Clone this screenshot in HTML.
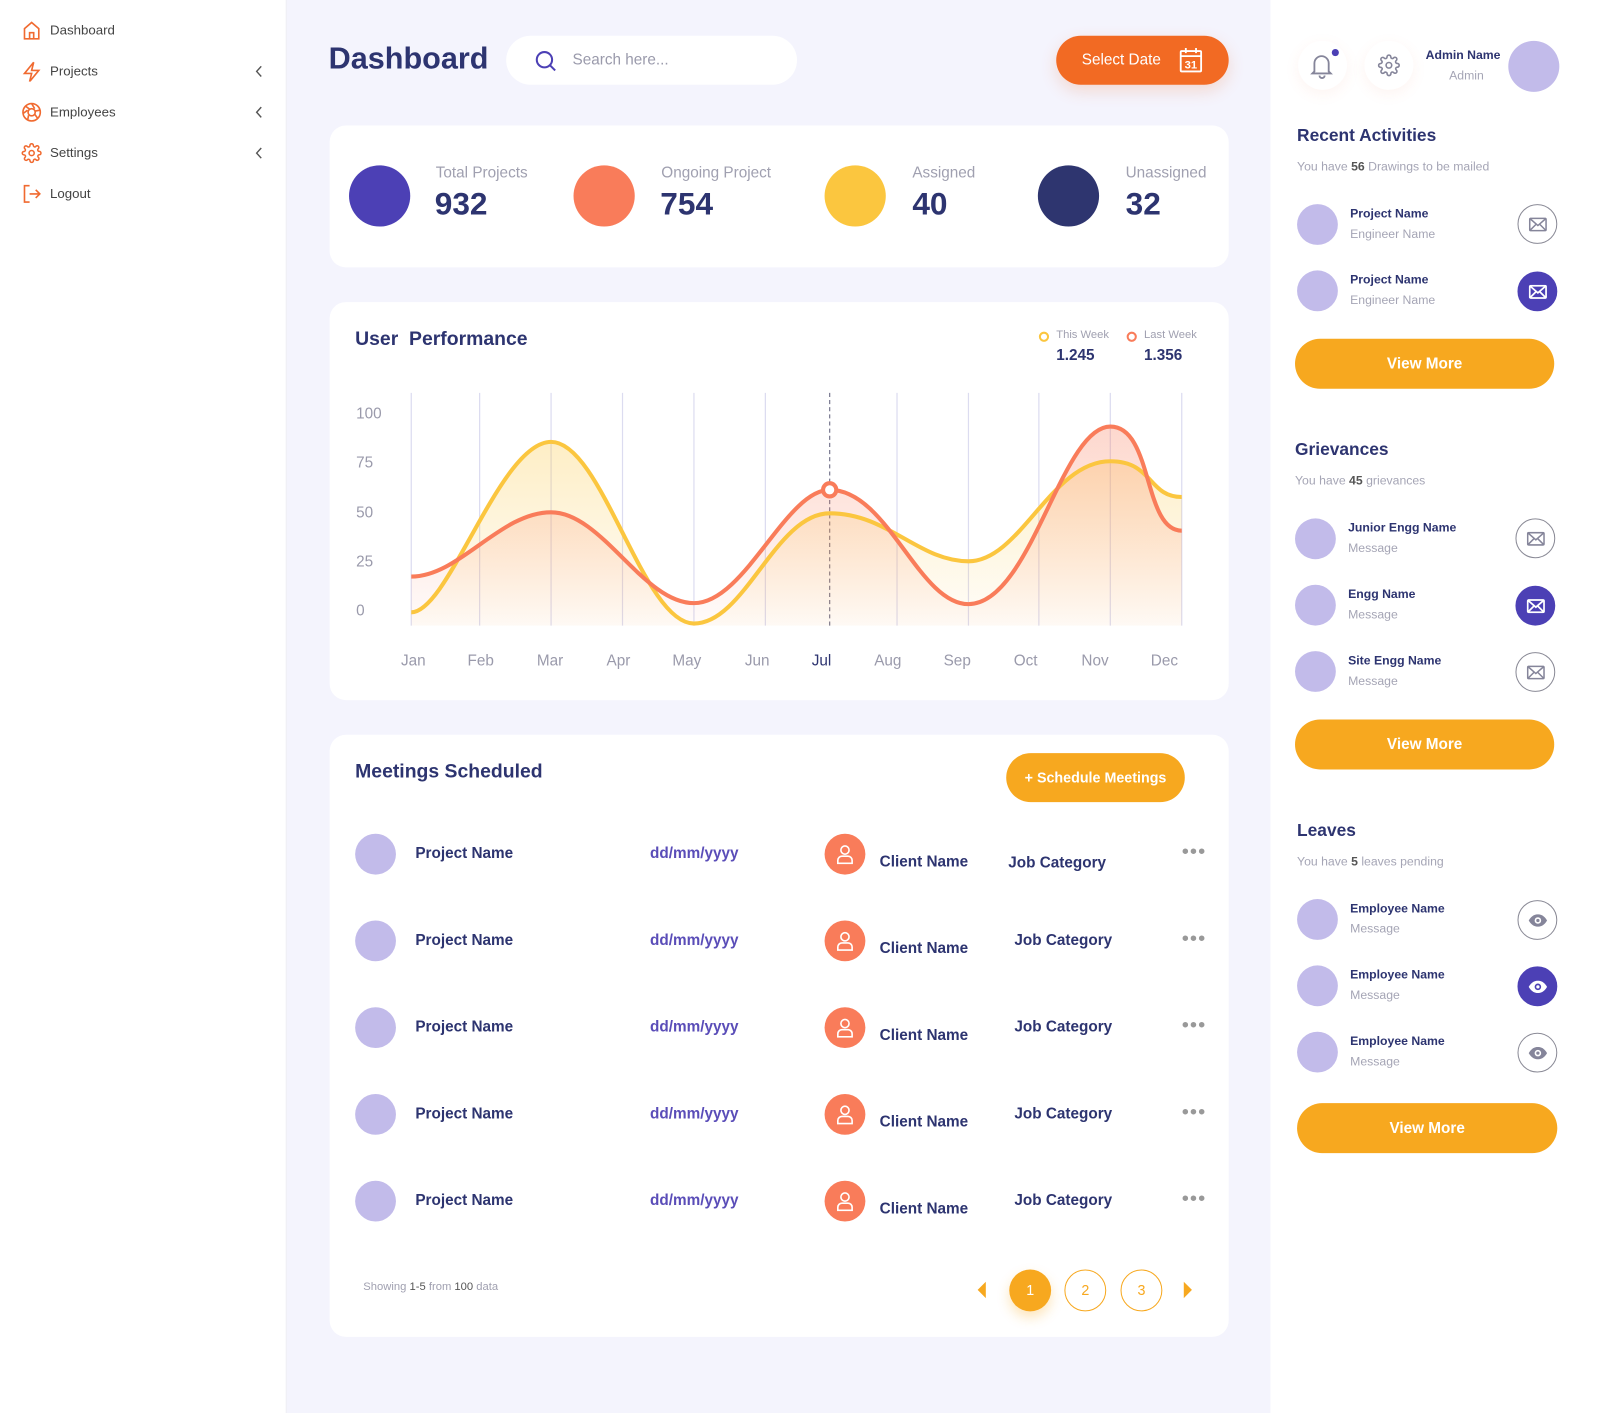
<!DOCTYPE html>
<html><head><meta charset="utf-8">
<style>
*{margin:0;padding:0;box-sizing:border-box}
html,body{width:1600px;height:1410px;overflow:hidden;background:#f4f4fd;font-family:"Liberation Sans",sans-serif}
#w{position:absolute;left:0;top:0;width:1570px;height:1385px;transform:scale(1.0205);transform-origin:0 0}
.a{position:absolute;white-space:nowrap}
.card{position:absolute;background:#fff;border-radius:16px}
.nav{font-size:13px;color:#444;line-height:16px}
.av{position:absolute;width:40px;height:40px;border-radius:50%;background:#c2bbea}
.nm{font-size:12px;font-weight:bold;color:#2d3470}
.sb{font-size:12px;color:#a5a5b5}
.ic{position:absolute;width:39px;height:39px;border-radius:50%;border:1.5px solid #8a8a96;display:flex;align-items:center;justify-content:center}
.ic.f{background:#4c40b5;border-color:#4c40b5}
.btn{position:absolute;background:#f7a81f;color:#fff;font-weight:bold;font-size:15px;border-radius:25px;display:flex;align-items:center;justify-content:center}
.pn{font-size:15px;font-weight:bold;color:#2d3470}
.dt{font-size:15px;font-weight:bold;color:#5a4db8}
.ci{position:absolute;width:40px;height:40px;border-radius:50%;background:#f97c5a;display:flex;align-items:center;justify-content:center}
.dots{font-size:20px;color:#999;letter-spacing:1px}
.ml{font-size:15px;color:#a0a0b0}
.h2{font-size:17px;font-weight:bold;color:#2d3470}
.chev{position:absolute;left:250px}
</style></head><body><div id="w">
<div class="a" style="left:0;top:0;width:281px;height:1385px;background:#fff;border-right:1px solid #ececf4"></div>
<svg class="a" style="left:21px;top:20px" width="20" height="20" viewBox="0 0 20 20" fill="none" stroke="#f06a30" stroke-width="1.6"><path d="M3 8L10 2l7 6v10H3z"/><path d="M8 18v-6h4v6"/></svg>
<div class="a nav" style="left:49px;top:22px">Dashboard</div>
<svg class="a" style="left:21px;top:60px" width="20" height="20" viewBox="0 0 20 20" fill="none" stroke="#f06a30" stroke-width="1.6"><path d="M12 1L3 12h7l-2 8 9-11h-7z"/></svg>
<div class="a nav" style="left:49px;top:62px">Projects</div>
<svg class="chev" style="top:64px" width="8" height="12"><path d="M6 1L1.5 6 6 11" fill="none" stroke="#555" stroke-width="1.4"/></svg>
<svg class="a" style="left:21px;top:100px" width="20" height="20" viewBox="0 0 20 20" fill="none" stroke="#f06a30" stroke-width="1.6"><circle cx="10" cy="10" r="8.5"/><circle cx="10" cy="10" r="3.5"/><path d="M10 1.5l3 5M18 8l-5 1M16 16l-3-4M6 18l1-5M2 11l4-3M4 4l4 3"/></svg>
<div class="a nav" style="left:49px;top:102px">Employees</div>
<svg class="chev" style="top:104px" width="8" height="12"><path d="M6 1L1.5 6 6 11" fill="none" stroke="#555" stroke-width="1.4"/></svg>
<svg class="a" style="left:21px;top:140px" width="20" height="20" viewBox="0 0 24 24" fill="none" stroke="#f06a30" stroke-width="1.8"><circle cx="12" cy="12" r="3"/><path d="M19.4 15a1.7 1.7 0 0 0 .3 1.8l.1.1a2 2 0 1 1-2.8 2.8l-.1-.1a1.7 1.7 0 0 0-1.8-.3 1.7 1.7 0 0 0-1 1.5V21a2 2 0 1 1-4 0v-.1a1.7 1.7 0 0 0-1.1-1.5 1.7 1.7 0 0 0-1.8.3l-.1.1a2 2 0 1 1-2.8-2.8l.1-.1a1.7 1.7 0 0 0 .3-1.8 1.7 1.7 0 0 0-1.5-1H3a2 2 0 1 1 0-4h.1a1.7 1.7 0 0 0 1.5-1.1 1.7 1.7 0 0 0-.3-1.8l-.1-.1a2 2 0 1 1 2.8-2.8l.1.1a1.7 1.7 0 0 0 1.8.3H9a1.7 1.7 0 0 0 1-1.5V3a2 2 0 1 1 4 0v.1a1.7 1.7 0 0 0 1 1.5 1.7 1.7 0 0 0 1.8-.3l.1-.1a2 2 0 1 1 2.8 2.8l-.1.1a1.7 1.7 0 0 0-.3 1.8V9a1.7 1.7 0 0 0 1.5 1H21a2 2 0 1 1 0 4h-.1a1.7 1.7 0 0 0-1.5 1z"/></svg>
<div class="a nav" style="left:49px;top:142px">Settings</div>
<svg class="chev" style="top:144px" width="8" height="12"><path d="M6 1L1.5 6 6 11" fill="none" stroke="#555" stroke-width="1.4"/></svg>
<svg class="a" style="left:21px;top:180px" width="20" height="20" viewBox="0 0 20 20" fill="none" stroke="#f06a30" stroke-width="1.6"><path d="M8 2H3v16h5M8 10h10M14 6l4 4-4 4"/></svg>
<div class="a nav" style="left:49px;top:182px">Logout</div>

<div class="a" style="left:322px;top:41px;font-size:30px;font-weight:bold;color:#2d3470">Dashboard</div>
<div class="a" style="left:496px;top:35px;width:285px;height:48px;background:#fff;border-radius:24px"></div>
<svg class="a" style="left:523px;top:48px" width="24" height="24" viewBox="0 0 24 24" fill="none" stroke="#4c40b5" stroke-width="2"><circle cx="10.5" cy="10.5" r="7.5"/><path d="M16 16l5 5"/></svg>
<div class="a" style="left:561px;top:50px;font-size:15px;color:#9a9aab">Search here...</div>
<div class="a" style="left:1035px;top:35px;width:169px;height:48px;background:#f26a23;border-radius:24px;box-shadow:0 6px 16px rgba(242,106,35,.2)"></div>
<div class="a" style="left:1060px;top:50px;font-size:15px;color:#fff">Select Date</div>
<svg class="a" style="left:1155px;top:46px" width="24" height="26" viewBox="0 0 24 26" fill="none" stroke="#fff" stroke-width="1.8"><rect x="2" y="4" width="20" height="20" rx="1"/><path d="M2 9h20M7 1v5M17 1v5"/><text x="12" y="21" font-size="11" font-weight="bold" fill="#fff" stroke="none" text-anchor="middle" font-family="Liberation Sans">31</text></svg>

<div class="card" style="left:323px;top:123px;width:881px;height:139px"></div>
<div class="a" style="left:342px;top:162px;width:60px;height:60px;border-radius:50%;background:#4c40b5"></div>
<div class="a" style="left:562px;top:162px;width:60px;height:60px;border-radius:50%;background:#f97c5a"></div>
<div class="a" style="left:808px;top:162px;width:60px;height:60px;border-radius:50%;background:#fbc63f"></div>
<div class="a" style="left:1017px;top:162px;width:60px;height:60px;border-radius:50%;background:#2e356f"></div>
<div class="a ml" style="left:427px;top:161px">Total Projects</div>
<div class="a ml" style="left:648px;top:161px">Ongoing Project</div>
<div class="a ml" style="left:894px;top:161px">Assigned</div>
<div class="a ml" style="left:1103px;top:161px">Unassigned</div>
<div class="a" style="left:426px;top:182px;font-size:31px;font-weight:bold;color:#2d3470">932</div>
<div class="a" style="left:647px;top:182px;font-size:31px;font-weight:bold;color:#2d3470">754</div>
<div class="a" style="left:894px;top:182px;font-size:31px;font-weight:bold;color:#2d3470">40</div>
<div class="a" style="left:1103px;top:182px;font-size:31px;font-weight:bold;color:#2d3470">32</div>

<div class="card" style="left:323px;top:296px;width:881px;height:390px"></div>
<div class="a" style="left:348px;top:322px;font-size:19px;font-weight:bold;color:#2d3470">User&nbsp; Performance</div>
<div class="a" style="left:1018px;top:325px;width:10px;height:10px;border-radius:50%;border:2.5px solid #fbc63f"></div>
<div class="a" style="left:1035px;top:322px;font-size:11px;color:#a0a0b0">This Week</div>
<div class="a" style="left:1104px;top:325px;width:10px;height:10px;border-radius:50%;border:2.5px solid #f97c5a"></div>
<div class="a" style="left:1121px;top:322px;font-size:11px;color:#a0a0b0">Last Week</div>
<div class="a" style="left:1035px;top:340px;font-size:15px;font-weight:bold;color:#2d3470">1.245</div>
<div class="a" style="left:1121px;top:340px;font-size:15px;font-weight:bold;color:#2d3470">1.356</div>
<svg class="a" style="left:0;top:0" width="1560" height="700">
<defs>
<linearGradient id="gy" x1="0" y1="0" x2="0" y2="1"><stop offset="0" stop-color="#fbc63f" stop-opacity=".3"/><stop offset="1" stop-color="#fbc63f" stop-opacity=".03"/></linearGradient>
<linearGradient id="gr" x1="0" y1="0" x2="0" y2="1"><stop offset="0" stop-color="#f97c5a" stop-opacity=".3"/><stop offset="1" stop-color="#f97c5a" stop-opacity=".03"/></linearGradient>
</defs>
<g stroke="#dcdcf0" stroke-width="1.2">
<path d="M403 385V613M470 385V613M540 385V613M610 385V613M680 385V613M750 385V613M879 385V613M949 385V613M1018 385V613M1088 385V613M1158 385V613"/>
</g>
<path d="M813 385V613" stroke="#7a7a90" stroke-width="1.2" stroke-dasharray="4 3"/>
<g font-family="Liberation Sans" font-size="15" fill="#9a9aab">
<text x="349" y="410">100</text><text x="349" y="458">75</text><text x="349" y="507">50</text><text x="349" y="555">25</text><text x="349" y="603">0</text>
<g text-anchor="middle"><text x="405" y="652">Jan</text><text x="471" y="652">Feb</text><text x="539" y="652">Mar</text><text x="606" y="652">Apr</text><text x="673" y="652">May</text><text x="742" y="652">Jun</text><text x="805" y="652" fill="#2d3470">Jul</text><text x="870" y="652">Aug</text><text x="938" y="652">Sep</text><text x="1005" y="652">Oct</text><text x="1073" y="652">Nov</text><text x="1141" y="652">Dec</text></g>
</g>
<path d="M403,600 C440,600 490,433 540,433 C590,433 630,611 680,611 C730,611 760,503 813,503 C870,503 900,550 949,550 C1000,550 1030,452 1088,452 C1130,452 1125,487 1158,487 V613 H403Z" fill="url(#gy)"/>
<path d="M403,565 C450,565 490,502 540,502 C590,502 630,591 680,591 C730,591 770,480 813,480 C870,480 900,592 949,592 C1010,592 1040,418 1088,418 C1130,418 1120,520 1158,520 V613 H403Z" fill="url(#gr)"/>
<path d="M403,600 C440,600 490,433 540,433 C590,433 630,611 680,611 C730,611 760,503 813,503 C870,503 900,550 949,550 C1000,550 1030,452 1088,452 C1130,452 1125,487 1158,487" fill="none" stroke="#fbc63f" stroke-width="4"/>
<path d="M403,565 C450,565 490,502 540,502 C590,502 630,591 680,591 C730,591 770,480 813,480 C870,480 900,592 949,592 C1010,592 1040,418 1088,418 C1130,418 1120,520 1158,520" fill="none" stroke="#f97c5a" stroke-width="4"/>
<circle cx="813" cy="480" r="6.5" fill="#fff" stroke="#f97c5a" stroke-width="4"/>
</svg>

<div class="card" style="left:323px;top:720px;width:881px;height:590px"></div>
<div class="a" style="left:348px;top:746px;font-size:19px;font-weight:bold;color:#2d3470">Meetings Scheduled</div>
<div class="btn" style="left:986px;top:738px;width:175px;height:48px;font-size:14px">+ Schedule Meetings</div>

<div class="av" style="left:348px;top:817px"></div><div class="a pn" style="left:407px;top:828px">Project Name</div><div class="a dt" style="left:637px;top:828px">dd/mm/yyyy</div>
<div class="ci" style="left:808px;top:817px"><svg width="18" height="20" viewBox="0 0 18 20" fill="none" stroke="#fff" stroke-width="1.6"><circle cx="9" cy="6" r="4"/><path d="M2 19v-3a4 4 0 0 1 4-4h6a4 4 0 0 1 4 4v3z"/></svg></div>
<div class="a pn" style="left:862px;top:836px">Client Name</div><div class="a pn" style="left:988px;top:837px">Job Category</div><div class="a dots" style="left:1158px;top:824px">•••</div>

<div class="av" style="left:348px;top:902px"></div><div class="a pn" style="left:407px;top:913px">Project Name</div><div class="a dt" style="left:637px;top:913px">dd/mm/yyyy</div>
<div class="ci" style="left:808px;top:902px"><svg width="18" height="20" viewBox="0 0 18 20" fill="none" stroke="#fff" stroke-width="1.6"><circle cx="9" cy="6" r="4"/><path d="M2 19v-3a4 4 0 0 1 4-4h6a4 4 0 0 1 4 4v3z"/></svg></div>
<div class="a pn" style="left:862px;top:921px">Client Name</div><div class="a pn" style="left:994px;top:913px">Job Category</div><div class="a dots" style="left:1158px;top:909px">•••</div>

<div class="av" style="left:348px;top:987px"></div><div class="a pn" style="left:407px;top:998px">Project Name</div><div class="a dt" style="left:637px;top:998px">dd/mm/yyyy</div>
<div class="ci" style="left:808px;top:987px"><svg width="18" height="20" viewBox="0 0 18 20" fill="none" stroke="#fff" stroke-width="1.6"><circle cx="9" cy="6" r="4"/><path d="M2 19v-3a4 4 0 0 1 4-4h6a4 4 0 0 1 4 4v3z"/></svg></div>
<div class="a pn" style="left:862px;top:1006px">Client Name</div><div class="a pn" style="left:994px;top:998px">Job Category</div><div class="a dots" style="left:1158px;top:994px">•••</div>

<div class="av" style="left:348px;top:1072px"></div><div class="a pn" style="left:407px;top:1083px">Project Name</div><div class="a dt" style="left:637px;top:1083px">dd/mm/yyyy</div>
<div class="ci" style="left:808px;top:1072px"><svg width="18" height="20" viewBox="0 0 18 20" fill="none" stroke="#fff" stroke-width="1.6"><circle cx="9" cy="6" r="4"/><path d="M2 19v-3a4 4 0 0 1 4-4h6a4 4 0 0 1 4 4v3z"/></svg></div>
<div class="a pn" style="left:862px;top:1091px">Client Name</div><div class="a pn" style="left:994px;top:1083px">Job Category</div><div class="a dots" style="left:1158px;top:1079px">•••</div>

<div class="av" style="left:348px;top:1157px"></div><div class="a pn" style="left:407px;top:1168px">Project Name</div><div class="a dt" style="left:637px;top:1168px">dd/mm/yyyy</div>
<div class="ci" style="left:808px;top:1157px"><svg width="18" height="20" viewBox="0 0 18 20" fill="none" stroke="#fff" stroke-width="1.6"><circle cx="9" cy="6" r="4"/><path d="M2 19v-3a4 4 0 0 1 4-4h6a4 4 0 0 1 4 4v3z"/></svg></div>
<div class="a pn" style="left:862px;top:1176px">Client Name</div><div class="a pn" style="left:994px;top:1168px">Job Category</div><div class="a dots" style="left:1158px;top:1164px">•••</div>

<div class="a" style="left:356px;top:1255px;font-size:11px;color:#a0a0b0">Showing <b style="color:#555;font-weight:normal">1-5</b> from <b style="color:#555;font-weight:normal">100</b> data</div>
<svg class="a" style="left:956px;top:1255px" width="12" height="18"><path d="M10 1L2 9l8 8z" fill="#f7a81f"/></svg>
<div class="a" style="left:989px;top:1244px;width:41px;height:41px;border-radius:50%;background:#f7a81f;color:#fff;font-size:14px;text-align:center;line-height:41px;box-shadow:0 6px 12px rgba(247,168,31,.3)">1</div>
<div class="a" style="left:1043px;top:1244px;width:41px;height:41px;border-radius:50%;border:1.5px solid #f7a81f;color:#f7a81f;font-size:14px;text-align:center;line-height:38px">2</div>
<div class="a" style="left:1098px;top:1244px;width:41px;height:41px;border-radius:50%;border:1.5px solid #f7a81f;color:#f7a81f;font-size:14px;text-align:center;line-height:38px">3</div>
<svg class="a" style="left:1158px;top:1255px" width="12" height="18"><path d="M2 1l8 8-8 8z" fill="#f7a81f"/></svg>

<div class="a" style="left:1245px;top:0;width:325px;height:1385px;background:#fff"></div>
<div class="a" style="left:1272px;top:40px;width:48px;height:48px;border-radius:50%;background:#fff;box-shadow:0 4px 14px rgba(240,120,80,.08)"></div>
<svg class="a" style="left:1283px;top:50px" width="26" height="28" viewBox="0 0 26 28" fill="none" stroke="#85859a" stroke-width="1.8"><path d="M5 20V12a7 7 0 0 1 14 0v8l2 2H3z"/><path d="M10 24a2.5 2.5 0 0 0 5 0"/></svg>
<div class="a" style="left:1305px;top:48px;width:7px;height:7px;border-radius:50%;background:#4c40b5"></div>
<div class="a" style="left:1337px;top:40px;width:48px;height:48px;border-radius:50%;background:#fff;box-shadow:0 4px 14px rgba(240,120,80,.08)"></div>
<svg class="a" style="left:1350px;top:53px" width="22" height="22" viewBox="0 0 24 24" fill="none" stroke="#85859a" stroke-width="1.7"><circle cx="12" cy="12" r="3"/><path d="M19.4 15a1.7 1.7 0 0 0 .3 1.8l.1.1a2 2 0 1 1-2.8 2.8l-.1-.1a1.7 1.7 0 0 0-1.8-.3 1.7 1.7 0 0 0-1 1.5V21a2 2 0 1 1-4 0v-.1a1.7 1.7 0 0 0-1.1-1.5 1.7 1.7 0 0 0-1.8.3l-.1.1a2 2 0 1 1-2.8-2.8l.1-.1a1.7 1.7 0 0 0 .3-1.8 1.7 1.7 0 0 0-1.5-1H3a2 2 0 1 1 0-4h.1a1.7 1.7 0 0 0 1.5-1.1 1.7 1.7 0 0 0-.3-1.8l-.1-.1a2 2 0 1 1 2.8-2.8l.1.1a1.7 1.7 0 0 0 1.8.3H9a1.7 1.7 0 0 0 1-1.5V3a2 2 0 1 1 4 0v.1a1.7 1.7 0 0 0 1 1.5 1.7 1.7 0 0 0 1.8-.3l.1-.1a2 2 0 1 1 2.8 2.8l-.1.1a1.7 1.7 0 0 0-.3 1.8V9a1.7 1.7 0 0 0 1.5 1H21a2 2 0 1 1 0 4h-.1a1.7 1.7 0 0 0-1.5 1z"/></svg>
<div class="a nm" style="left:1397px;top:47px">Admin Name</div>
<div class="a sb" style="left:1420px;top:67px">Admin</div>
<div class="a" style="left:1478px;top:40px;width:50px;height:50px;border-radius:50%;background:#c2bbea"></div>

<div class="a h2" style="left:1271px;top:123px">Recent Activities</div>
<div class="a sb" style="left:1271px;top:156px">You have <b style="color:#555">56</b> Drawings to be mailed</div>
<div class="av" style="left:1271px;top:200px"></div><div class="a nm" style="left:1323px;top:202px">Project Name</div><div class="a sb" style="left:1323px;top:222px">Engineer Name</div>
<div class="ic" style="left:1487px;top:200px"><svg width="18" height="14" viewBox="0 0 18 14" fill="none" stroke="#85859a" stroke-width="1.5"><rect x="1" y="1" width="16" height="12" rx="1"/><path d="M1 1l8 7 8-7M1 13l6-6M17 13l-6-6"/></svg></div>
<div class="av" style="left:1271px;top:265px"></div><div class="a nm" style="left:1323px;top:267px">Project Name</div><div class="a sb" style="left:1323px;top:287px">Engineer Name</div>
<div class="ic f" style="left:1487px;top:266px"><svg width="18" height="14" viewBox="0 0 18 14" fill="none" stroke="#fff" stroke-width="1.7"><rect x="1" y="1" width="16" height="12" rx="1"/><path d="M1 1l8 7 8-7M1 13l6-6M17 13l-6-6"/></svg></div>
<div class="btn" style="left:1269px;top:332px;width:254px;height:49px">View More</div>

<div class="a h2" style="left:1269px;top:431px">Grievances</div>
<div class="a sb" style="left:1269px;top:464px">You have <b style="color:#555">45</b> grievances</div>
<div class="av" style="left:1269px;top:508px"></div><div class="a nm" style="left:1321px;top:510px">Junior Engg Name</div><div class="a sb" style="left:1321px;top:530px">Message</div>
<div class="ic" style="left:1485px;top:508px"><svg width="18" height="14" viewBox="0 0 18 14" fill="none" stroke="#85859a" stroke-width="1.5"><rect x="1" y="1" width="16" height="12" rx="1"/><path d="M1 1l8 7 8-7M1 13l6-6M17 13l-6-6"/></svg></div>
<div class="av" style="left:1269px;top:573px"></div><div class="a nm" style="left:1321px;top:575px">Engg Name</div><div class="a sb" style="left:1321px;top:595px">Message</div>
<div class="ic f" style="left:1485px;top:574px"><svg width="18" height="14" viewBox="0 0 18 14" fill="none" stroke="#fff" stroke-width="1.7"><rect x="1" y="1" width="16" height="12" rx="1"/><path d="M1 1l8 7 8-7M1 13l6-6M17 13l-6-6"/></svg></div>
<div class="av" style="left:1269px;top:638px"></div><div class="a nm" style="left:1321px;top:640px">Site Engg Name</div><div class="a sb" style="left:1321px;top:660px">Message</div>
<div class="ic" style="left:1485px;top:639px"><svg width="18" height="14" viewBox="0 0 18 14" fill="none" stroke="#85859a" stroke-width="1.5"><rect x="1" y="1" width="16" height="12" rx="1"/><path d="M1 1l8 7 8-7M1 13l6-6M17 13l-6-6"/></svg></div>
<div class="btn" style="left:1269px;top:705px;width:254px;height:49px">View More</div>

<div class="a h2" style="left:1271px;top:804px">Leaves</div>
<div class="a sb" style="left:1271px;top:837px">You have <b style="color:#555">5</b> leaves pending</div>
<div class="av" style="left:1271px;top:881px"></div><div class="a nm" style="left:1323px;top:883px">Employee Name</div><div class="a sb" style="left:1323px;top:903px">Message</div>
<div class="ic" style="left:1487px;top:882px"><svg width="20" height="14" viewBox="0 0 20 14"><path d="M1 7C4 2 7 1 10 1s6 1 9 6c-3 5-6 6-9 6S4 12 1 7z" fill="#85859a"/><circle cx="10" cy="7" r="3.2" fill="#fff"/><circle cx="10" cy="7" r="1.6" fill="#85859a"/></svg></div>
<div class="av" style="left:1271px;top:946px"></div><div class="a nm" style="left:1323px;top:948px">Employee Name</div><div class="a sb" style="left:1323px;top:968px">Message</div>
<div class="ic f" style="left:1487px;top:947px"><svg width="20" height="14" viewBox="0 0 20 14"><path d="M1 7C4 2 7 1 10 1s6 1 9 6c-3 5-6 6-9 6S4 12 1 7z" fill="#fff"/><circle cx="10" cy="7" r="3.2" fill="#4c40b5"/><circle cx="10" cy="7" r="1.6" fill="#fff"/></svg></div>
<div class="av" style="left:1271px;top:1011px"></div><div class="a nm" style="left:1323px;top:1013px">Employee Name</div><div class="a sb" style="left:1323px;top:1033px">Message</div>
<div class="ic" style="left:1487px;top:1012px"><svg width="20" height="14" viewBox="0 0 20 14"><path d="M1 7C4 2 7 1 10 1s6 1 9 6c-3 5-6 6-9 6S4 12 1 7z" fill="#85859a"/><circle cx="10" cy="7" r="3.2" fill="#fff"/><circle cx="10" cy="7" r="1.6" fill="#85859a"/></svg></div>
<div class="btn" style="left:1271px;top:1081px;width:255px;height:49px">View More</div>
</div></body></html>
